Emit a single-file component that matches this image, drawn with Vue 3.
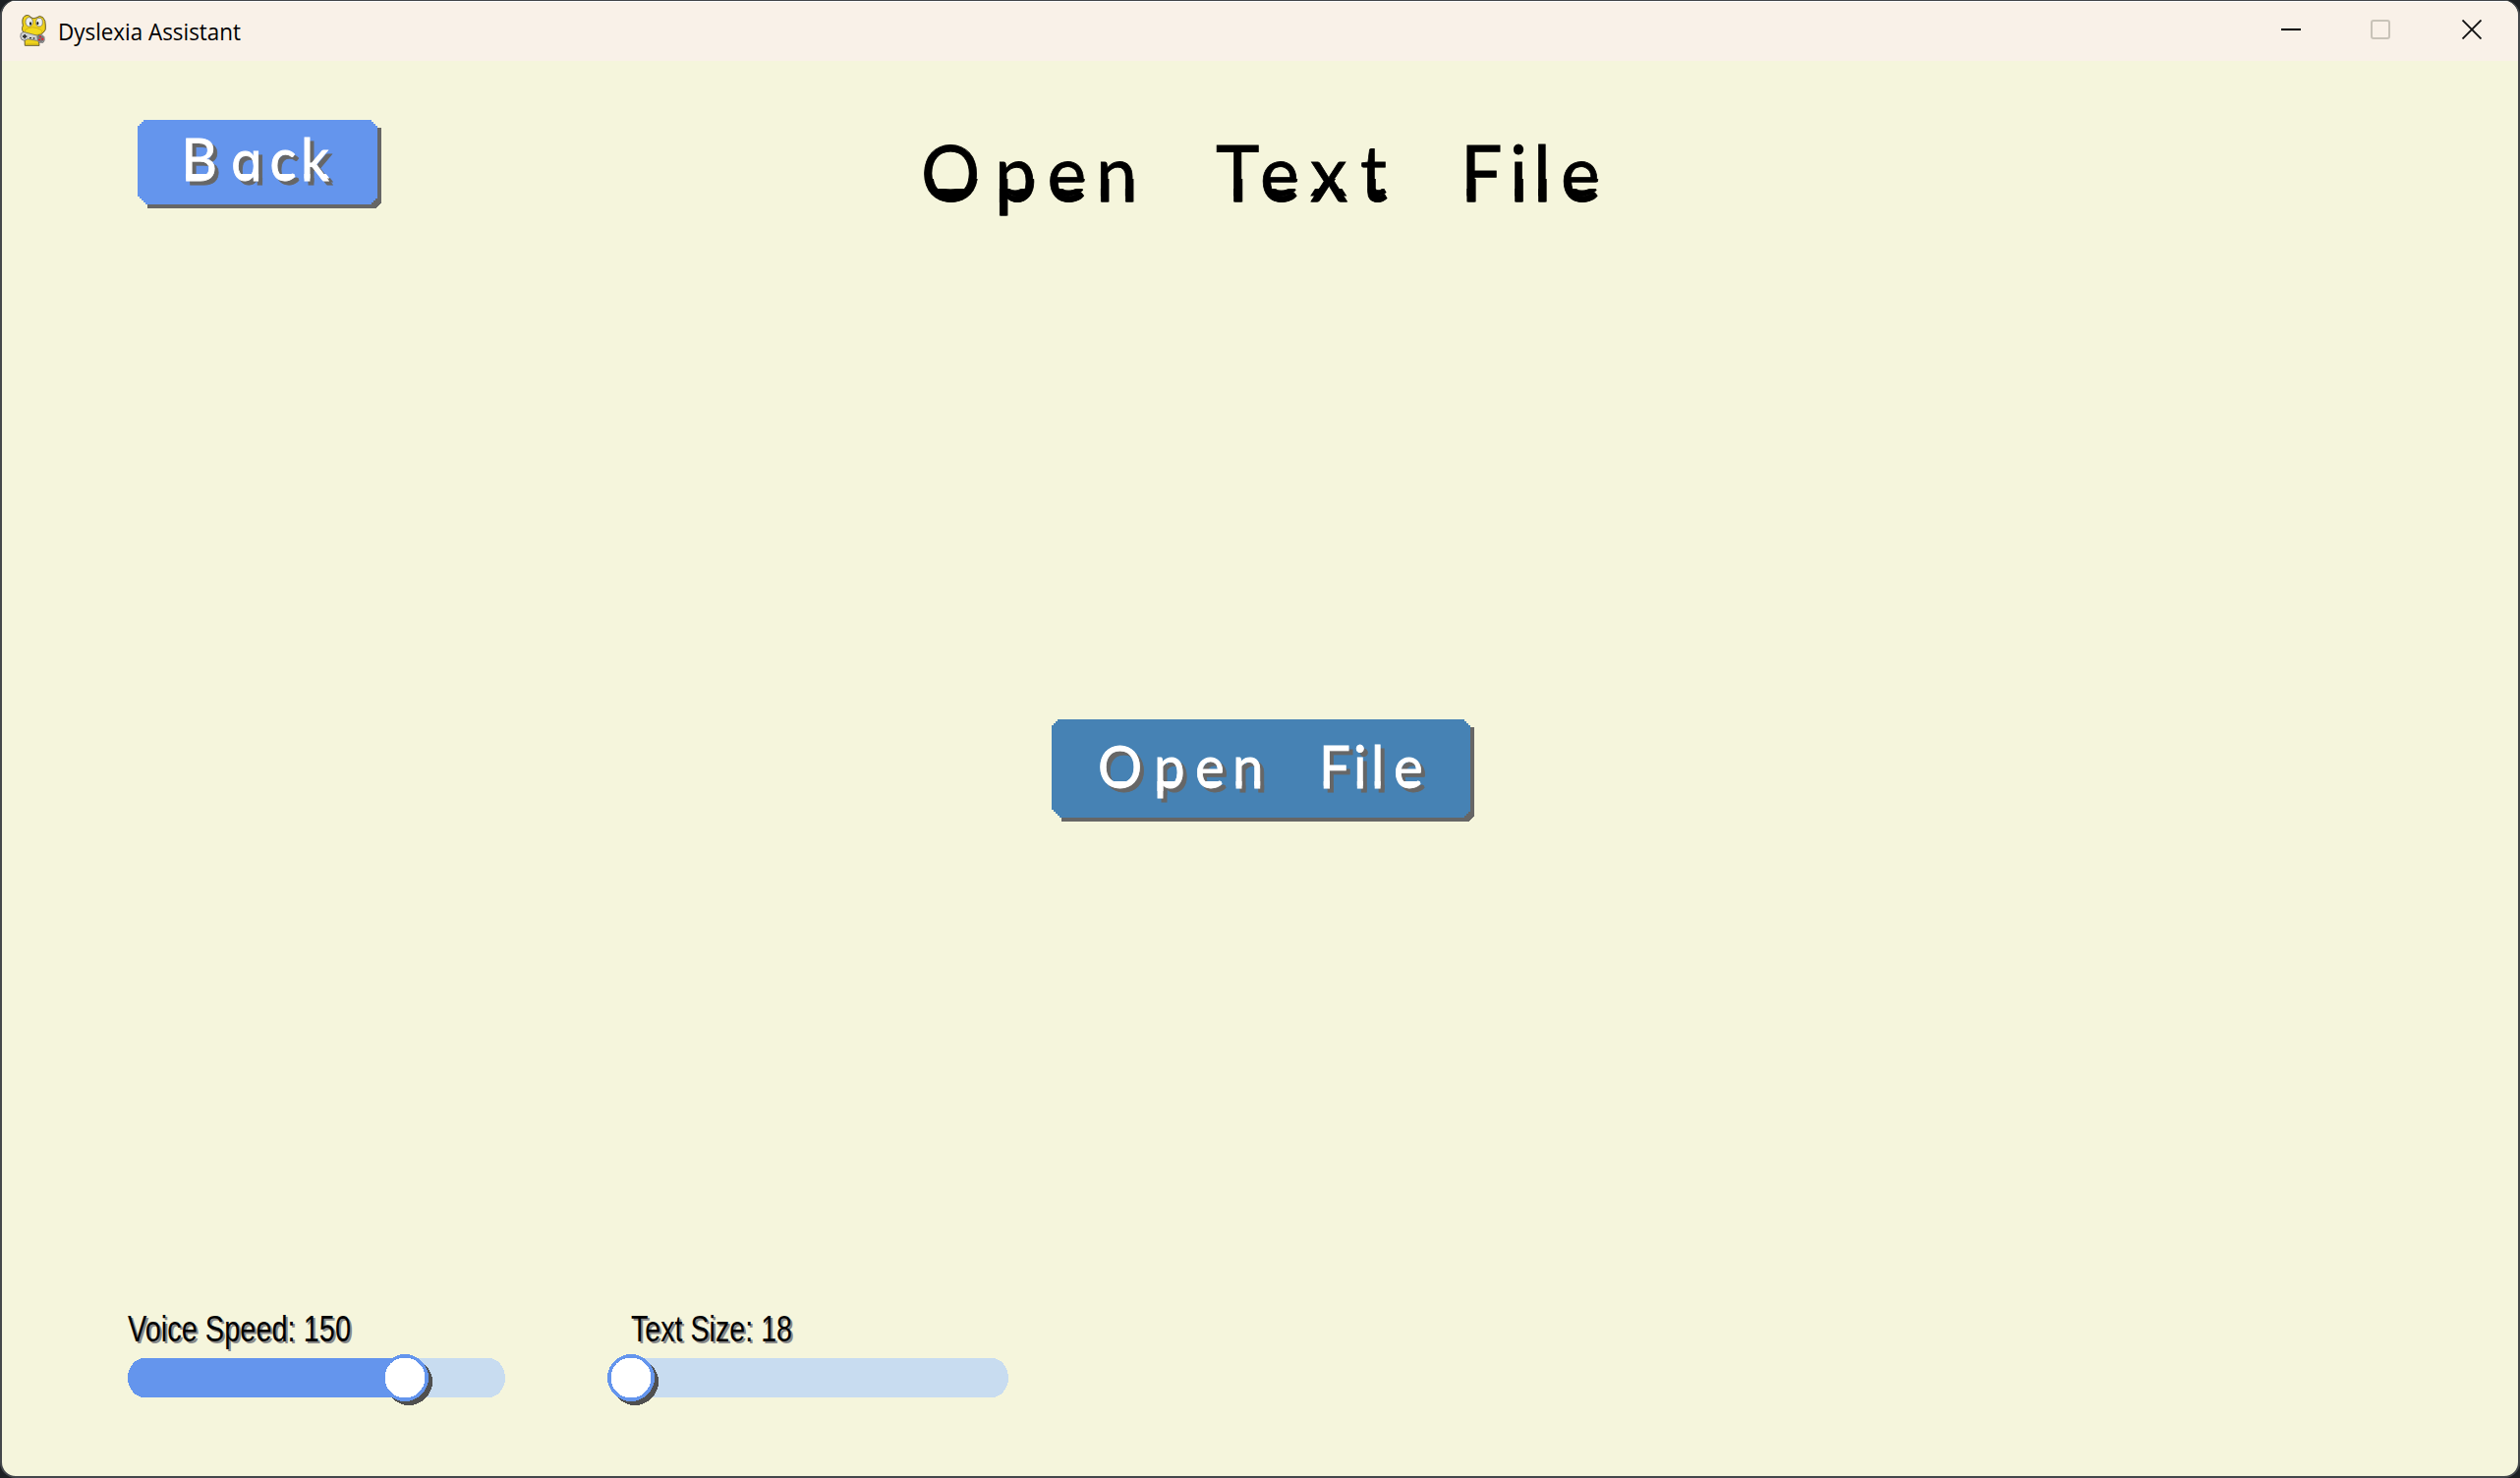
<script setup>
import { ref } from 'vue'

const sliders = ref([
  { id: 'speed', label: 'Voice Speed: 150', start: 12, track: 384, fill: 282, textWidth: 227 },
  { id: 'size', label: 'Text Size: 18', start: 24, track: 384, fill: 0, textWidth: 164 },
])

// Glyph positions are given in drawn pixels and divided by the horizontal squeeze.
const squeeze = 0.94
const place = (xs) => xs.map((x) => (x / squeeze).toFixed(2)).join(' ')
const narrow = `scale(${squeeze} 1)`

const headingX = place([5, 80, 133.5, 183, 224, 305, 350, 401, 452, 524, 554, 604, 628, 656])
const backX = place([44.5, 95, 134.5, 166])
const openX = place([47, 104, 146, 184, 220, 272, 307, 325, 348])
</script>

<template>
  <div class="desktop">
    <div class="window">
      <header class="titlebar">
        <svg class="app-icon" width="28" height="32" viewBox="0 0 84 96">
          <path d="M15 4 Q27 -3 36 9 Q42 13 51 9 Q61 0 71 8 Q80 17 79 33 Q82 47 72 55 Q64 62 56 62 L60 94 H16 L15 72 L20 61 Q10 57 8 47 Q6 40 10 33 Q5 12 15 4Z" fill="#efd21b" stroke="#4d4521" stroke-width="2.5" />
          <path d="M17 46 Q38 31 65 46 Q75 54 58 60 Q40 66 22 60 Q12 54 17 46" fill="#f2d91b" stroke="#c0a418" stroke-width="2" />
          <ellipse cx="29" cy="22" rx="11" ry="14" fill="#eceff1" stroke="#66665d" stroke-width="2" />
          <ellipse cx="60" cy="23" rx="10" ry="13" fill="#eceff1" stroke="#66665d" stroke-width="2" />
          <ellipse cx="33" cy="27" rx="3" ry="5" fill="#111" />
          <ellipse cx="55" cy="26" rx="3" ry="5" fill="#111" />
          <path d="M4 57 Q10 49 21 55 L55 64 Q70 58 75 68 Q78 79 72 85 Q60 88 53 79 L25 74 Q14 83 6 76 Q0 68 4 57Z" fill="#d0d2d1" stroke="#56585a" stroke-width="2" />
          <path d="M52 66 Q64 58 74 67 V80 Q64 88 54 79Z" fill="#77797a" />
          <path d="M13 60 h5 v4 h4 v5 h-4 v4 h-5 v-4 h-4 v-5 h4z" fill="#303234" />
          <path d="M30 69h6v4h-6zM41 70h5v4h-5z" fill="#333" />
          <path d="M60 65h6v5h-6zM67 71h6v6h-6zM57 74h6v5h-6z" fill="#e3202c" />
          <path d="M20 90H58" fill="none" stroke="#c0a418" stroke-width="2" />
        </svg>
        <svg class="app-title" width="200" height="40" viewBox="0 0 200 40">
          <text x="3" y="26" textLength="186" lengthAdjust="spacingAndGlyphs">Dyslexia Assistant</text>
        </svg>
        <div class="controls">
          <svg width="20" height="20" viewBox="0 0 20 20"><path d="M0 10H20" stroke="#000" stroke-width="2" /></svg>
          <svg width="20" height="20" viewBox="0 0 20 20"><rect x="1" y="1" width="18" height="18" rx="2" fill="none" stroke="#c8c3b8" stroke-width="2" /></svg>
          <svg width="20" height="20" viewBox="0 0 20 20"><path d="M.5 .5L19.5 19.5M19.5 .5L.5 19.5" stroke="#111" stroke-width="1.9" /></svg>
        </div>
      </header>

      <main class="content">
        <div class="top">
          <button class="btn">
            <svg width="248" height="90" viewBox="0 0 248 90">
              <defs>
                <filter id="heavy-sm" filterUnits="userSpaceOnUse" x="0" y="0" width="248" height="90">
                  <feOffset in="SourceGraphic" dy="-3" x="0" y="55" width="248" height="10" result="base" />
                  <feMerge><feMergeNode in="SourceGraphic" /><feMergeNode in="base" /></feMerge>
                </filter>
              </defs>
              <g shape-rendering="crispEdges">
                <path d="M10 80V90H242L248 84V8H240Z" fill="#666" />
                <path d="M6 0H238V2H240V4H242V6H244V80H242V82H240V84H238V86H8V84H6V82H4V80H2V78H0V6H2V4H4V2H6Z" fill="#6495ed" />
              </g>
              <g class="cast">
                <g filter="url(#heavy-sm)">
                  <text class="dys small" :transform="narrow" :x="backX" y="62">B<tspan class="single-a">a</tspan>ck</text>
                </g>
              </g>
            </svg>
          </button>
          <svg class="heading" width="720" height="140" viewBox="0 0 720 140">
            <defs>
              <filter id="heavy-lg" filterUnits="userSpaceOnUse" x="0" y="0" width="720" height="140">
                <feOffset in="SourceGraphic" dy="-6" x="0" y="56" width="720" height="14" result="base" />
                <feOffset in="SourceGraphic" dx="1" x="0" y="46" width="720" height="60" result="side" />
                <feMerge><feMergeNode in="SourceGraphic" /><feMergeNode in="base" /><feMergeNode in="side" /></feMerge>
              </filter>
            </defs>
            <g filter="url(#heavy-lg)">
              <text class="dys large" :transform="narrow" :x="headingX" y="69">Open Text File</text>
            </g>
          </svg>
        </div>

        <div class="middle">
          <button class="btn">
            <svg width="430" height="104" viewBox="0 0 430 104">
              <defs>
                <filter id="heavy-md" filterUnits="userSpaceOnUse" x="0" y="0" width="430" height="104">
                  <feOffset in="SourceGraphic" dy="-3" x="0" y="63" width="430" height="10" result="base" />
                  <feMerge><feMergeNode in="SourceGraphic" /><feMergeNode in="base" /></feMerge>
                </filter>
              </defs>
              <g shape-rendering="crispEdges">
                <path d="M10 94V104H424L430 98V8H422Z" fill="#666" />
                <path d="M6 0H420V2H422V4H424V6H426V94H424V96H422V98H420V100H8V98H6V96H4V94H2V92H0V6H2V4H4V2H6Z" fill="#4682b4" />
              </g>
              <g class="cast">
                <g filter="url(#heavy-md)">
                  <text class="dys small" :transform="narrow" :x="openX" y="70.5">Open File</text>
                </g>
              </g>
            </svg>
          </button>
        </div>

        <div class="bottom">
          <svg v-for="s in sliders" :key="s.id" class="slider" width="420" height="110" viewBox="0 0 420 110">
            <text class="label shade" :x="s.start + 2" y="47" :textLength="s.textWidth" lengthAdjust="spacingAndGlyphs" aria-hidden="true">{{ s.label }}</text>
            <text class="label" :x="s.start" y="45" :textLength="s.textWidth" lengthAdjust="spacingAndGlyphs">{{ s.label }}</text>
            <g shape-rendering="crispEdges">
              <rect :x="s.start" y="62" :width="s.track" height="40" rx="17" ry="20" fill="#c8dcf0" />
              <rect :x="s.start" y="62" :width="s.fill" height="40" rx="17" ry="20" fill="#6495ed" />
              <circle :cx="s.start + s.fill + 4" cy="86" r="24" fill="#505050" />
              <circle :cx="s.start + s.fill" cy="82" r="24" fill="#6495ed" />
              <circle :cx="s.start + s.fill" cy="82" r="20.5" fill="#fff" />
            </g>
          </svg>
        </div>
      </main>
    </div>
  </div>
</template>

<style>
body {
  margin: 0;
  background: #23272b;
}
</style>

<style scoped>
.desktop {
  box-sizing: border-box;
  width: 2564px;
  height: 1504px;
  overflow: hidden;
  background: #1d2023;
}
.window {
  box-sizing: border-box;
  display: flex;
  flex-direction: column;
  width: 2564px;
  height: 1504px;
  border: solid #44474b;
  border-width: 1px 2px 2px;
  border-radius: 16px;
  overflow: hidden;
  background: #f5f5dc;
}
.titlebar {
  display: flex;
  align-items: flex-start;
  box-sizing: border-box;
  height: 61px;
  padding: 14px 37px 0 18px;
  background: #f9f1e8;
  box-shadow: inset 0 1px #fff;
}
.app-title {
  margin-left: 8px;
}
.app-title text {
  font-family: "Open Sans", sans-serif;
  font-size: 23.5px;
}
.controls {
  display: flex;
  gap: 71px;
  margin-left: auto;
  padding-top: 5px;
}
.controls svg:nth-child(2) {
  margin-right: 2px;
}
.content {
  display: flex;
  flex: 1;
  flex-direction: column;
}
.top {
  display: flex;
  align-items: flex-start;
  height: 160px;
  padding: 60px 0 0 138px;
}
.heading {
  margin: 14px 0 0 544px;
}
.btn {
  display: block;
  padding: 0;
  border: 0;
  background: none;
}
.btn svg {
  display: block;
}
.middle {
  display: flex;
  flex: 1;
  align-items: flex-start;
  padding: 450px 0 0 1068px;
}
.bottom {
  display: flex;
  gap: 80px;
  height: 182px;
  padding-left: 116px;
}
.dys {
  font-family: Lato, sans-serif;
  font-kerning: none;
}
.large {
  font-size: 80px;
  fill: #000;
  stroke: #000;
  stroke-width: 0.8px;
}
.small {
  font-size: 60px;
  fill: #fff;
  stroke: #fff;
  stroke-width: 0.8px;
}
.single-a {
  font-family: Inter, sans-serif;
  font-size: 55px;
  font-feature-settings: "cv11";
}
.cast {
  filter: drop-shadow(4px 4px 0 #666);
}
.label {
  font-family: "Liberation Sans", Arial, sans-serif;
  font-size: 37px;
  fill: #000;
}
.shade {
  fill: #888;
}
</style>
